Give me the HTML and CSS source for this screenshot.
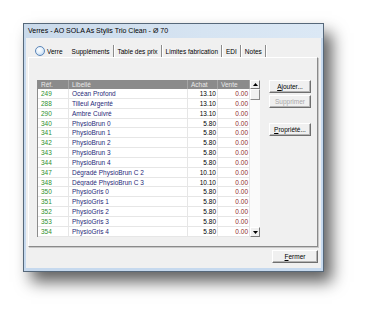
FILE: index.html
```html
<!DOCTYPE html>
<html lang="fr">
<head>
<meta charset="utf-8">
<link rel="stylesheet" href="styles.css">
</head>
<body>
<div class="window">
  <div class="titlebar">Verres - AO SOLA As Stylis Trio Clean - Ø 70</div>
  <div class="client">
    <div class="tabs">
      <div class="tab tab-first"><span class="radio"></span>Verre</div>
      <div class="tab sel">Suppléments</div>
      <div class="tab">Table des prix</div>
      <div class="tab">Limites fabrication</div>
      <div class="tab">EDI</div>
      <div class="tab">Notes</div>
    </div>
    <div class="panel">
      <div class="listview">
        <div class="grid">
          <div class="h">Réf.</div><div class="h">Libellé</div><div class="h">Achat</div><div class="h">Vente</div>
          <div class="c ref">249</div><div class="c lib">Océan Profond</div><div class="c num">13.10</div><div class="c ven">0.00</div>
          <div class="c ref">288</div><div class="c lib">Tilleul Argenté</div><div class="c num">13.10</div><div class="c ven">0.00</div>
          <div class="c ref">290</div><div class="c lib">Ambre Cuivré</div><div class="c num">13.10</div><div class="c ven">0.00</div>
          <div class="c ref">340</div><div class="c lib">PhysioBrun 0</div><div class="c num">5.80</div><div class="c ven">0.00</div>
          <div class="c ref">341</div><div class="c lib">PhysioBrun 1</div><div class="c num">5.80</div><div class="c ven">0.00</div>
          <div class="c ref">342</div><div class="c lib">PhysioBrun 2</div><div class="c num">5.80</div><div class="c ven">0.00</div>
          <div class="c ref">343</div><div class="c lib">PhysioBrun 3</div><div class="c num">5.80</div><div class="c ven">0.00</div>
          <div class="c ref">344</div><div class="c lib">PhysioBrun 4</div><div class="c num">5.80</div><div class="c ven">0.00</div>
          <div class="c ref">347</div><div class="c lib">Dégradé PhysioBrun C 2</div><div class="c num">10.10</div><div class="c ven">0.00</div>
          <div class="c ref">348</div><div class="c lib">Dégradé PhysioBrun C 3</div><div class="c num">10.10</div><div class="c ven">0.00</div>
          <div class="c ref">350</div><div class="c lib">PhysioGris 0</div><div class="c num">5.80</div><div class="c ven">0.00</div>
          <div class="c ref">351</div><div class="c lib">PhysioGris 1</div><div class="c num">5.80</div><div class="c ven">0.00</div>
          <div class="c ref">352</div><div class="c lib">PhysioGris 2</div><div class="c num">5.80</div><div class="c ven">0.00</div>
          <div class="c ref">353</div><div class="c lib">PhysioGris 3</div><div class="c num">5.80</div><div class="c ven">0.00</div>
          <div class="c ref">354</div><div class="c lib">PhysioGris 4</div><div class="c num">5.80</div><div class="c ven">0.00</div>
        </div>
        <div class="scrollbar">
          <div class="sbtn"><svg width="5" height="3" viewBox="0 0 5 3"><path d="M0 3h5L2.5 0z" fill="#000"/></svg></div>
          <div class="thumb"></div>
          <div class="track"></div>
          <div class="sbtn"><svg width="5" height="3" viewBox="0 0 5 3"><path d="M0 0h5L2.5 3z" fill="#000"/></svg></div>
        </div>
      </div>
      <div class="buttons">
        <div class="btn"><u>A</u>jouter...</div>
        <div class="btn disabled">Supprimer</div>
        <div class="btn gap"><u>P</u>ropriété...</div>
      </div>
    </div>
    <div class="footer">
      <div class="btn close"><u>F</u>ermer</div>
    </div>
  </div>
</div>
</body>
</html>
```

FILE: styles.css
```css
html, body {
  margin: 0;
  padding: 0;
  background: #fff;
}
body {
  width: 368px;
  height: 316px;
  overflow: hidden;
  font-family: "Liberation Sans", Arial, sans-serif;
  font-size: 6.5px;
  color: #000;
}
.window {
  margin: 23px 0 0 23px;
  width: 301px;
  height: 249px;
  box-sizing: border-box;
  border: 1px solid #56687a;
  background: #c6d9ee;
  padding: 0 2px 3px 2px;
  display: flex;
  flex-direction: column;
  box-shadow: 8px 10px 15px rgba(0, 0, 0, 0.62);
}
.titlebar {
  height: 14px;
  line-height: 14px;
  margin: 0 -2px;
  padding-left: 4px;
  font-size: 7px;
  background: linear-gradient(90deg, #c9d9ea 0%, #d6e4f2 60%, #dbe8f5 100%);
  color: #000;
  white-space: nowrap;
}
.client {
  flex: 1;
  background: #f0f0f0;
  padding: 7px 3px 0 2px;
  display: flex;
  flex-direction: column;
}
.tabs {
  display: flex;
  height: 12px;
  align-items: stretch;
  padding-left: 6px;
}
.tab {
  display: flex;
  align-items: center;
  padding: 0 3px 0 3px;
  border-right: 1px solid #8c8c8c;
  box-shadow: 1px 0 0 #fff;
  margin-right: 1px;
  white-space: nowrap;
}
.tab-first {
  border-right: none;
  box-shadow: none;
  padding: 0 5px 0 1px;
}
.radio {
  width: 8px;
  height: 8px;
  border-radius: 50%;
  border: 1px solid #5c86b8;
  background: radial-gradient(circle at 40% 35%, #ffffff 0%, #e4f0fb 45%, #a9c9ec 100%);
  margin-right: 2px;
}
.panel {
  height: 190px;
  box-sizing: border-box;
  border-left: 1px solid #fff;
  border-top: 1px solid #fff;
  border-right: 1px solid #8a8a8a;
  border-bottom: 1px solid #8a8a8a;
  box-shadow: 1px 1px 0 #c8c8c8;
  padding: 22px 0 0 8px;
  display: flex;
  align-items: flex-start;
}
.listview {
  display: flex;
  border-left: 1px solid #8c8c8c;
  height: 157px;
}
.grid {
  display: grid;
  grid-template-columns: 31px 119px 30px 32px;
  grid-template-rows: 9px;
  grid-auto-rows: 9.85px;
  background: #fff;
}
.h {
  background: #8b8b8b;
  color: #e9e9e9;
  line-height: 9px;
  padding-left: 3px;
  border-right: 1px solid #a5a5a5;
  white-space: nowrap;
  overflow: hidden;
}
.c {
  line-height: 9.85px;
  box-sizing: border-box;
  border-bottom: 1px solid #e6e6e6;
  border-right: 1px solid #e6e6e6;
  padding: 0 3px;
  white-space: nowrap;
  overflow: hidden;
}
.ref { color: #2f8f2f; }
.lib { color: #1f2a78; }
.num { text-align: right; padding-right: 1px; }
.ven { text-align: right; color: #8e2c2c; padding-right: 1px; }
.scrollbar {
  width: 10px;
  display: flex;
  flex-direction: column;
  background: #f7f7f7;
}
.sbtn {
  height: 9px;
  box-sizing: border-box;
  background: #f0f0f0;
  border-top: 1px solid #fff;
  border-left: 1px solid #fff;
  border-right: 1px solid #7a7a7a;
  border-bottom: 1px solid #7a7a7a;
  display: flex;
  align-items: center;
  justify-content: center;
}
.sbtn:last-child { height: 10px; }
.thumb {
  height: 11px;
  box-sizing: border-box;
  background: #f0f0f0;
  border-top: 1px solid #fff;
  border-left: 1px solid #fff;
  border-right: 1px solid #8a8a8a;
  border-bottom: 1px solid #8a8a8a;
}
.track {
  flex: 1;
  background: #fafafa;
}
.buttons {
  display: flex;
  flex-direction: column;
  margin-left: 9px;
  margin-top: 0;
}
.btn {
  width: 42px;
  height: 13px;
  box-sizing: border-box;
  background: #f0f0f0;
  border-top: 1px solid #fff;
  border-left: 1px solid #fff;
  border-right: 1px solid #6f6f6f;
  border-bottom: 1px solid #6f6f6f;
  box-shadow: inset -1px -1px 0 #b4b4b4;
  display: flex;
  align-items: center;
  justify-content: center;
  white-space: nowrap;
  margin-bottom: 2px;
}
.btn u { text-decoration: underline; }
.disabled { color: #a8a8a8; }
.gap { margin-top: 13px; }
.footer {
  display: flex;
  justify-content: flex-end;
  margin-top: 3px;
}
.close {
  width: 46px;
  height: 13px;
}
```
